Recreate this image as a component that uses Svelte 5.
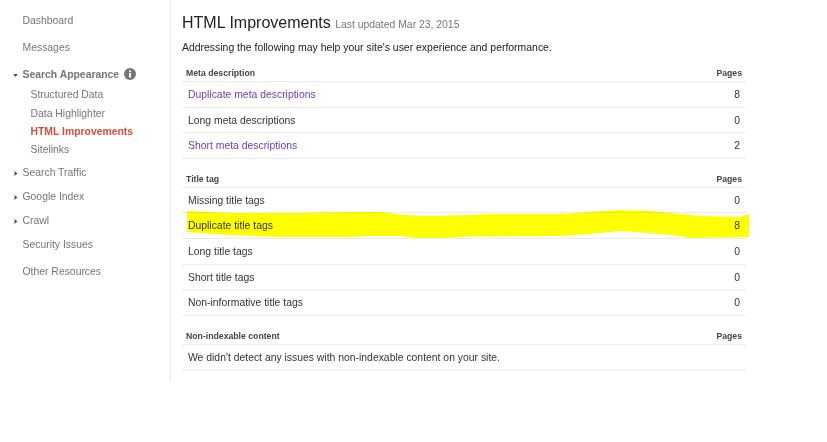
<script>
    const sections = [
        {
            title: 'Meta description',
            rows: [
                { label: 'Duplicate meta descriptions', count: 8, link: true },
                { label: 'Long meta descriptions', count: 0 },
                { label: 'Short meta descriptions', count: 2, link: true }
            ]
        },
        {
            title: 'Title tag',
            rows: [
                { label: 'Missing title tags', count: 0 },
                { label: 'Duplicate title tags', count: 8 },
                { label: 'Long title tags', count: 0 },
                { label: 'Short title tags', count: 0 },
                { label: 'Non-informative title tags', count: 0 }
            ]
        }
    ];
</script>

<div class="page">
    <nav class="side">
        <div class="item first">Dashboard</div>
        <div class="item">Messages</div>
        <div class="item group open">
            <svg class="caret" width="7" height="7" viewBox="0 0 7 7"><path d="M1 2h5L3.5 5z" /></svg>
            <b>Search Appearance</b>
            <svg class="info" width="12" height="12" viewBox="0 0 12 12">
                <circle cx="6" cy="6" r="6" fill="#757575" />
                <rect x="5" y="5" width="2" height="4.5" fill="#fff" />
                <rect x="5" y="2.5" width="2" height="1.6" fill="#fff" />
            </svg>
        </div>
        <div class="sub">Structured Data</div>
        <div class="sub">Data Highlighter</div>
        <div class="sub active">HTML Improvements</div>
        <div class="sub">Sitelinks</div>
        <div class="item group tree">
            <svg class="caret" width="7" height="7" viewBox="0 0 7 7"><path d="M2.5 1v5l3-2.5z" /></svg>
            Search Traffic
        </div>
        <div class="item group tree">
            <svg class="caret" width="7" height="7" viewBox="0 0 7 7"><path d="M2.5 1v5l3-2.5z" /></svg>
            Google Index
        </div>
        <div class="item group tree">
            <svg class="caret" width="7" height="7" viewBox="0 0 7 7"><path d="M2.5 1v5l3-2.5z" /></svg>
            Crawl
        </div>
        <div class="item">Security Issues</div>
        <div class="item">Other Resources</div>
    </nav>

    <main class="content">
        <h1>HTML Improvements <span>Last updated Mar 23, 2015</span></h1>
        <p class="intro">Addressing the following may help your site's user experience and performance.</p>

        {#each sections as s}
            <div class="head"><span>{s.title}</span><span>Pages</span></div>
            {#each s.rows as r}
                <div class="row">
                    <span class:link={r.link}>{r.label}</span>
                    <span class="num">{r.count}</span>
                </div>
            {/each}
        {/each}

        <div class="head"><span>Non-indexable content</span><span>Pages</span></div>
        <div class="row note"><span>We didn't detect any issues with non-indexable content on your site.</span></div>
    </main>

    <!-- hand-drawn highlighter stroke over the duplicate title row -->
    <svg class="marker" width="827" height="442" viewBox="0 0 827 442">
        <path fill="#ffff00" d="M187 211 L230 213 L300 213 L350 212 L380 212 L405 215 L430 216 L470 215 L490 214 L560 214 L590 212 L620 210 L650 211 L680 214 L700 216 L740 217 L749 214 L749 237 L690 238 L680 236 L650 233 L620 231 L590 234 L560 236 L470 236.5 L440 238 L415 238 L400 236 L370 236 L350 237 L280 237 L230 235 L187 232 Z" />
    </svg>
</div>

<style>
    :global(body) {
        background: #fff;
    }

    .page {
        position: relative;
        width: 827px;
        height: 442px;
        display: flex;
        align-items: flex-start;
        font-family: "Liberation Sans", Arial, sans-serif;
        overflow: hidden;
    }

    .side {
        width: 171px;
        height: 380px;
        box-sizing: border-box;
        border-right: 1px solid #ebebeb;
        padding-top: 14px;
        flex: none;
        font-size: 10.4px;
        color: #757575;
    }

    .item {
        height: 14px;
        line-height: 14px;
        padding-left: 22.5px;
        margin-bottom: 13.2px;
        position: relative;
        white-space: nowrap;
    }

    .item.open {
        margin-bottom: 6px;
    }

    .item.tree {
        margin-bottom: 10px;
    }

    .item b {
        font-weight: 700;
    }

    .caret {
        position: absolute;
        left: 12px;
        top: 4px;
        fill: #555;
    }

    .info {
        position: absolute;
        left: 124px;
        top: 0;
    }

    .sub {
        height: 14px;
        line-height: 14px;
        padding-left: 30.5px;
        margin-bottom: 4.3px;
        white-space: nowrap;
    }

    .sub:nth-child(7) {
        margin-bottom: 9px;
    }

    .active {
        color: #dd4b39;
        font-weight: 700;
    }

    .content {
        width: 564px;
        margin-left: 11px;
        padding-top: 12px;
        flex: none;
    }

    h1 {
        margin: 0;
        height: 22px;
        line-height: 22px;
        font-size: 16px;
        font-weight: 400;
        color: #222;
        white-space: nowrap;
    }

    h1 span {
        font-size: 10.4px;
        color: #777;
    }

    .intro {
        margin: 7px 0 11px;
        height: 14px;
        line-height: 14px;
        font-size: 10.45px;
        color: #222;
    }

    .head {
        display: flex;
        justify-content: space-between;
        height: 15px;
        line-height: 14px;
        padding: 0 4px;
        font-size: 8.7px;
        font-weight: 700;
        color: #444;
        border-bottom: 1px solid #ebebeb;
    }

    .row {
        display: flex;
        justify-content: space-between;
        align-items: center;
        height: 24.7px;
        padding: 0 6px;
        font-size: 10.4px;
        color: #333;
        border-bottom: 1px solid #ebebeb;
    }

    .row:has(+ .head) {
        margin-bottom: 12.6px;
    }

    .link {
        color: #6a3fc9;
    }

    .num {
        color: #333;
    }

    .marker {
        position: absolute;
        left: 0;
        top: 0;
        mix-blend-mode: multiply;
        pointer-events: none;
    }
</style>
